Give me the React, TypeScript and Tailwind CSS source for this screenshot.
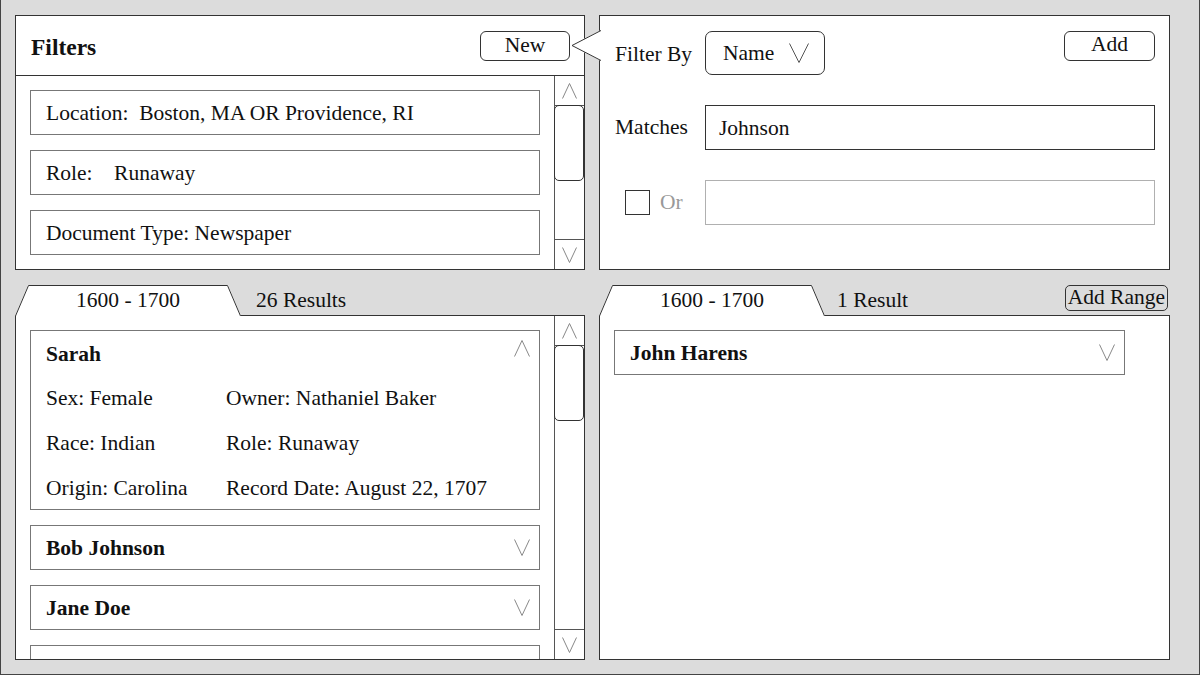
import React from 'react';

const filters = ['Location:  Boston, MA OR Providence, RI', 'Role:    Runaway', 'Document Type: Newspaper'];

const sarah = [
  ['Sex: Female', 'Owner: Nathaniel Baker'],
  ['Race: Indian', 'Role: Runaway'],
  ['Origin: Carolina', 'Record Date: August 22, 1707'],
];

function Chevron({ up = false, w = 16, h = 17, color = '#888' }: { up?: boolean; w?: number; h?: number; color?: string }) {
  const pts = up ? `0.5,${h - 0.5} ${w / 2},0.5 ${w - 0.5},${h - 0.5}` : `0.5,0.5 ${w / 2},${h - 0.5} ${w - 0.5},0.5`;
  return (
    <svg width={w} height={h} viewBox={`0 0 ${w} ${h}`} className="shrink-0">
      <polyline points={pts} fill="none" stroke={color} strokeWidth="1" />
    </svg>
  );
}

function Scrollbar() {
  return (
    <div className="flex w-[30px] shrink-0 flex-col border-l border-[#555]">
      <div className="flex h-[30px] shrink-0 items-center justify-center border-b border-[#555]">
        <Chevron up w={15} h={16} />
      </div>
      <div className="-ml-px -mt-px h-[76px] shrink-0 rounded-[5px] border border-[#333]" />
      <div className="flex-1" />
      <div className="flex h-[30px] shrink-0 items-center justify-center border-t border-[#555]">
        <Chevron w={15} h={16} />
      </div>
    </div>
  );
}

function Tab({ label, width }: { label: string; width: number }) {
  return (
    <div className="relative z-10 -mb-px flex h-[31px] shrink-0 items-center justify-center self-end pt-px" style={{ width }}>
      <svg width={width} height="31" viewBox={`0 0 ${width} 31`} className="absolute inset-0">
        <polygon points={`0,31 13,0 ${width - 13},0 ${width},31`} fill="#fff" />
        <polyline points={`0.5,31 13.5,0.5 ${width - 13.5},0.5 ${width - 0.5},31`} fill="none" stroke="#333" strokeWidth="1" />
      </svg>
      <span className="relative leading-none">{label}</span>
    </div>
  );
}

function CollapsedCard({ name, width }: { name: string; width?: string }) {
  return (
    <div className={`flex h-[45px] shrink-0 items-center justify-between border border-[#777] pl-[15px] pr-[9px] ${width ?? ''}`}>
      <span className="pt-[2px] font-bold">{name}</span>
      <Chevron />
    </div>
  );
}

export default function App() {
  return (
    <div className="h-[675px] w-[1200px] border-x border-b border-[#444] bg-[#dcdcdc] pl-[14px] pt-[15px] font-['Liberation_Serif',serif] text-[21.5px] text-[#111]">
      <div className="grid grid-cols-[570px_571px] grid-rows-[255px_375px] gap-x-[14px] gap-y-[15px]">
        {/* Filters list */}
        <section className="flex min-h-0 flex-col border border-[#333] bg-white">
          <header className="flex h-[60px] shrink-0 items-center justify-between border-b border-[#333] pl-[15px] pr-[14px]">
            <h2 className="mt-[5px] text-[23.5px] font-bold">Filters</h2>
            <button className="h-[30px] w-[90px] rounded-[6px] border border-[#333] leading-none">New</button>
          </header>
          <div className="flex min-h-0 flex-1">
            <div className="flex flex-1 flex-col gap-[15px] overflow-hidden px-[14px] pt-[14px]">
              {filters.map((f) => (
                <div key={f} className="flex h-[45px] shrink-0 items-center whitespace-pre border border-[#777] px-[15px] pt-[2px]">
                  {f}
                </div>
              ))}
            </div>
            <Scrollbar />
          </div>
        </section>

        {/* Filter editor */}
        <section className="relative border border-[#333] bg-white pl-[15px] pr-[14px] pt-[15px]">
          <svg width="30" height="31" viewBox="0 0 30 31" className="absolute left-[-29px] top-[14px]">
            <polygon points="0,15.5 30,0 30,31" fill="#fff" />
            <polyline points="30,0.5 1,15.5 30,30.5" fill="none" stroke="#333" strokeWidth="1" />
          </svg>
          <div className="flex h-[44px] items-center">
            <span className="w-[90px] pt-[2px]">Filter By</span>
            <div className="flex h-[44px] w-[120px] items-center justify-between rounded-[7px] border border-[#333] pl-[17px] pr-[15px]">
              <span>Name</span>
              <Chevron w={20} h={20} color="#555" />
            </div>
            <button className="ml-auto h-[30px] w-[91px] self-start rounded-[6px] border border-[#333] pb-[2px] leading-none">Add</button>
          </div>
          <div className="mt-[30px] flex h-[45px] items-center">
            <span className="w-[90px]">Matches</span>
            <div className="flex h-full flex-1 items-center border-[1.5px] border-[#333] pl-[13px] pt-[2px]">Johnson</div>
          </div>
          <div className="mt-[30px] flex h-[45px] items-center">
            <div className="flex w-[90px] items-center pl-[10px]">
              <span className="h-[25px] w-[25px] border-[1.5px] border-[#333]" />
              <span className="ml-[10px] text-[#999]">Or</span>
            </div>
            <div className="h-full flex-1 border-[1.5px] border-[#b0b0b0]" />
          </div>
        </section>

        {/* Results, left */}
        <section className="flex min-h-0 flex-col">
          <div className="flex h-[30px] shrink-0 items-center">
            <Tab label="1600 - 1700" width={226} />
            <span className="ml-[15px]">26 Results</span>
          </div>
          <div className="flex min-h-0 flex-1 border border-[#333] bg-white">
            <div className="flex flex-1 flex-col gap-[15px] overflow-hidden px-[14px] pt-[14px]">
              <div className="shrink-0 border border-[#777] pl-[15px] pr-[9px]">
                <div className="flex h-[44px] justify-between">
                  <span className="self-center pt-[3px] font-bold">Sarah</span>
                  <span className="mt-[9px]">
                    <Chevron up />
                  </span>
                </div>
                <div className="grid grid-cols-[180px_1fr] grid-rows-[45px_45px_44px] items-center">
                  {sarah.flat().map((t) => (
                    <span key={t} className="pt-[2px]">
                      {t}
                    </span>
                  ))}
                </div>
              </div>
              <CollapsedCard name="Bob Johnson" />
              <CollapsedCard name="Jane Doe" />
              <div className="h-[45px] shrink-0 border border-[#777]" />
            </div>
            <Scrollbar />
          </div>
        </section>

        {/* Results, right */}
        <section className="flex min-h-0 flex-col">
          <div className="flex h-[30px] shrink-0 items-center">
            <Tab label="1600 - 1700" width={226} />
            <span className="ml-[12px]">1 Result</span>
            <button className="ml-auto mr-[2px] h-[26px] self-start rounded-[5px] border border-[#333] px-[2px] leading-none">
              Add Range
            </button>
          </div>
          <div className="min-h-0 flex-1 border border-[#333] bg-white pl-[14px] pt-[14px]">
            <CollapsedCard name="John Harens" width="w-[511px]" />
          </div>
        </section>
      </div>
    </div>
  );
}
